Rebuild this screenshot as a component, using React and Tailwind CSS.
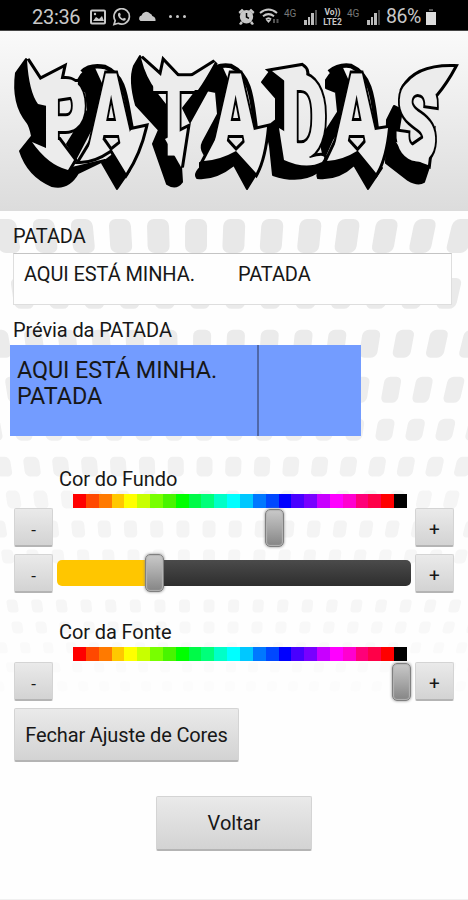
import React from "react";

const HUES = [
  "bg-[#ff0000]", "bg-[#ff4800]", "bg-[#ff7a00]", "bg-[#ffc800]", "bg-[#ffff00]", "bg-[#c8ff00]", "bg-[#78ff00]",
  "bg-[#48f500]", "bg-[#00ff00]", "bg-[#00fa48]", "bg-[#00ff7a]", "bg-[#00ffc8]", "bg-[#00ffff]", "bg-[#00c8ff]",
  "bg-[#0078ff]", "bg-[#0048ff]", "bg-[#0000ff]", "bg-[#4800ff]", "bg-[#7800ff]", "bg-[#c800ff]", "bg-[#ff00ff]",
  "bg-[#ff00d0]", "bg-[#ff0078]", "bg-[#ff0048]", "bg-[#ff0000]", "bg-[#000000]",
];

// Each dot row: top, height, one dot centre, spacing, dot width, grey level
const DOT_ROWS = [
  [219, 34, 196, 37.8, 22, "#e8e8e8"],
  [278, 31, 200, 35.6, 20, "#eaeaea"],
  [330, 28, 202, 33.6, 18, "#ebebeb"],
  [377, 26, 203, 31.4, 17, "#ededed"],
  [419, 22, 204, 30.2, 17, "#efefef"],
  [457, 20, 204.5, 28.8, 16, "#f1f1f1"],
  [491, 18, 205, 27.4, 14, "#f5f5f5"],
  [521, 17, 209, 26.2, 13, "#f4f4f4"],
  [550, 14, 209, 25.2, 12, "#f6f6f6"],
  [600, 13, 209, 24.6, 11, "#f6f6f6"],
  [622, 12, 209, 24, 11, "#f8f8f8"],
  [643, 11, 209, 23, 10, "#fafafa"],
  [663, 10, 209, 22, 10, "#fbfbfb"],
  [682, 10, 209, 21, 10, "#fcfcfc"],
];

function Backdrop() {
  return (
    <svg className="absolute inset-0 h-full w-full" viewBox="0 211 468 689" aria-hidden="true">
      {DOT_ROWS.map(([top, h, anchor, step, w, fill]) =>
        Array.from({ length: 27 }, (_, i) => {
          const x = anchor + (i - 13) * step;
          if (x < -20 || x > 488) return null;
          return (
            <rect
              key={`${top}-${i}`}
              x={-w / 2}
              y={-h / 2}
              width={w}
              height={h}
              rx={w * 0.32}
              fill={fill}
              transform={`translate(${x} ${top + h / 2}) skewX(${-(x - 190) * 0.05})`}
            />
          );
        })
      )}
    </svg>
  );
}

// Arrow tips and flares that sprout from the lettering
const FLARES = [
  "M27 60 L40 80 L63 68 L60 82 L78 82 L76 96 L50 100 L47 106 L38 104 Q29 92 27 60Z",
  "M32 142 L46 148 L47 140 L59 140 L74 160 L68 170 Q48 165 32 142Z",
  "M122 142 L131 130 L145 127 Q139 153 126 173 L112 150Z",
  "M80 161 L94 138 L103 140 L110 150 Q94 161 80 161Z",
  "M141 58 L161 76 L164 62 L183 82 L215 62 Q204 82 198 90 L156 90 Q146 78 141 58Z",
  "M165 139 L187 128 L181 167Z",
  "M204 161 L216 138 L226 140 L236 151 Q220 160 204 161Z",
  "M245 142 L254 130 L267 127 Q264 158 256 173 L236 151Z",
  "M272 71 L302 66 Q309 70 305 82 L288 84 L286 82Z",
  "M279 128 L289 134 L310 158 Q330 152 322 162 Q306 170 284 160Z",
  "M327 161 L338 138 L347 140 L357 151 Q343 160 327 161Z",
  "M366 142 L375 130 L388 128 Q385 158 376 173 L358 151Z",
  "M404 88 Q416 66 454 67 Q446 82 436 94 L418 90Z",
  "M396 142 L412 146 L432 132 L428 165 Q406 158 396 142Z",
];

function Logo() {
  return (
    <svg className="h-[180px] w-full" viewBox="0 31 468 180">
      {/* drop shadow masses and lower spikes */}
      <g fill="#000" stroke="#000" strokeWidth="2" strokeLinejoin="round">
        <path d="M26 59 L32 80 L44 108 L44 150 L72 168 L105 160 L78 173 Q68 190 52 186 Q28 176 20 151 L32 136 Q30 126 27 122 Q12 104 16 73Z" />
        <path d="M78 80 Q84 68 94 68 L104 90 L98 116 L76 158 L67 144 L88 110 L86 92 L76 86Z" />
        <path d="M102 163 L114 154 L130 170 L117 189Z" />
        <path d="M140 56 L146 80 L168 108 L168 140 L181 166 L182 182 Q176 190 167 184 L153 144 L159 130 L136 105 Q129 80 134 66Z" />
        <path d="M183 108 L200 86 L211 84 L190 122Z" />
        <path d="M205 80 Q212 68 222 68 L232 90 L228 116 L204 154 Q200 148 203 142 L218 114 L216 92 L206 90Z" />
        <path d="M200 163 L236 153 L260 168 L247 189 L234 165 Q215 180 197 178 Q194 174 200 168Z" />
        <path d="M262 82 L271 70 L287 82 L285 130 L283 158 Q302 168 322 160 L318 172 Q300 184 273 175 L270 146 L266 128 L276 120 L276 98Z" />
        <path d="M326 80 Q333 68 342 68 L352 90 L348 116 L332 140 L324 158 L320 140 L338 112 L336 92 L326 88Z" />
        <path d="M322 162 L357 152 L382 168 L368 189 L354 165 Q338 180 318 178 Q316 174 320 168Z" />
        <path d="M387 120 L394 106 L402 110 L397 140 Q412 158 430 164 L424 182 Q418 186 408 180 L386 163Z" />
      </g>
      <g fill="#ececec" stroke="#000" strokeWidth="6" strokeLinejoin="miter" strokeMiterlimit="2.5">
        {FLARES.map((d) => <path key={d} d={d} />)}
      </g>
      {/* crowns arching over the letters */}
      <g fill="none" stroke="#000" strokeWidth="4.5">
        <path d="M82 72 Q90 64 105 67 C127 76 126 103 132 130" />
        <path d="M209 72 Q217 64 231 66 C252 76 252 103 256 130" />
        <path d="M329 72 Q339 64 351 66 C373 76 373 103 377 130" />
      </g>
      <text
        transform="scale(.62 1)"
        fontFamily="Roboto, 'Liberation Sans', sans-serif"
        fontWeight="900"
        fill="#ececec"
        stroke="#000"
        strokeWidth="6"
        strokeLinejoin="miter"
        paintOrder="stroke"
      >
        <tspan x="68" y="158" fontSize="112">P</tspan>
        <tspan x="143" y="149" fontSize="106">A</tspan>
        <tspan x="245" y="156" fontSize="112">T</tspan>
        <tspan x="344" y="149" fontSize="106">A</tspan>
        <tspan x="452" y="159" fontSize="118">D</tspan>
        <tspan x="539" y="149" fontSize="106">A</tspan>
        <tspan x="634" y="157" fontSize="112" rotate="5">S</tspan>
      </text>
      <g fill="#ececec">
        {FLARES.map((d) => <path key={d} d={d} />)}
      </g>
    </svg>
  );
}

const BUTTON =
  "flex shrink-0 items-center justify-center rounded-[2px] border border-[#d4d4d4] border-b-2 border-b-[#b4b4b4] bg-linear-to-b from-[#eaeaea] to-[#d3d3d3] text-[#171717]";

function Step({ children }) {
  return <button className={`${BUTTON} h-[39px] w-[39px] text-[19px]`}>{children}</button>;
}

function Minus() {
  return <Step><span className="pt-[6px] text-[17px] leading-[20px]">-</span></Step>;
}

function Plus() {
  return <Step><span className="pt-[6px] leading-[20px]">+</span></Step>;
}

function Thumb() {
  return (
    <div className="h-[38px] w-[19px] shrink-0 rounded-[5px] border border-[#808080] bg-linear-to-b from-[#c9c9c9] via-[#a8a8a8] to-[#858585] shadow-[0_0_3px_#888,inset_0_0_1px_1px_#b5b5b5]" />
  );
}

function HueBar() {
  return (
    <div className="ml-[73px] flex h-[14px] w-[334px]">
      {HUES.map((c, i) => (
        <div key={i} className={`flex-1 ${c}`} />
      ))}
    </div>
  );
}

function Bars({ faded }) {
  return (
    <div className="flex h-[16px] items-end gap-[1px]">
      <i className="h-[5px] w-[2.5px] bg-[#bbb]" />
      <i className="h-[8px] w-[2.5px] bg-[#bbb]" />
      <i className="h-[12px] w-[2.5px] bg-[#bbb]" />
      <i className={`h-[15px] w-[2.5px] ${faded ? "bg-[#444]" : "bg-[#555]"}`} />
    </div>
  );
}

function StatusBar() {
  return (
    <div className="flex h-[31px] items-center border-b border-[#444] bg-black pl-[32px] pt-[3px] text-[#c8c8c8]">
      <span className="w-[58px] text-[20px] tracking-[-0.3px]">23:36</span>
      <svg className="h-[16px] w-[16px]" viewBox="0 0 16 16" fill="none" stroke="currentColor" strokeWidth="2">
        <rect x="1" y="1.5" width="14" height="13" rx="1" />
        <path d="M3 12 L6 8 L9 10 L12 7 L14 12Z" fill="currentColor" stroke="none" />
        <circle cx="5" cy="5" r="1.2" fill="currentColor" stroke="none" />
      </svg>
      <svg className="ml-[6px] h-[18px] w-[19px]" viewBox="0 0 19 18" fill="none" stroke="currentColor" strokeWidth="1.7">
        <path d="M2 16.5 L3.2 12.6 A7.7 7.7 0 1 1 6.2 15.3Z" />
        <path d="M6.5 5 L8 4.8 L8.8 7 L8 8 Q9 10 11 10.7 L12 9.8 L14 10.8 Q13.6 13 11.7 12.8 Q7 11.6 6 7.5 Q5.8 6 6.5 5Z" fill="currentColor" stroke="none" />
      </svg>
      <svg className="-mt-[2px] ml-[7px] h-[11px] w-[18px]" viewBox="0 0 18 11" fill="currentColor">
        <path d="M2.5 11 A3 3 0 0 1 3.5 5.5 A5 5 0 0 1 12 3.5 Q14 4 14.3 6 Q18 7 17.5 11Z" />
      </svg>
      <div className="ml-[13px] flex gap-[4px]">
        <i className="h-[3px] w-[3px] rounded-full bg-current" />
        <i className="h-[3px] w-[3px] rounded-full bg-current" />
        <i className="h-[3px] w-[3px] rounded-full bg-current" />
      </div>
      <svg className="ml-[52px] h-[17px] w-[17px]" viewBox="0 0 17 17" fill="currentColor">
        <circle cx="8.5" cy="8.8" r="6.7" />
        <path d="M0.5 4 L4 0.8 L6 2.4 L2 6Z M16.5 4 L13 .8 L11 2.4 L15 6Z M3 13 L5 15 L3 17 L1 16Z M14 13 L12 15 L14 17 L16 16Z" />
        <path d="M8.5 5 V9 L11 10.3" fill="none" stroke="#000" strokeWidth="1.5" />
      </svg>
      <svg className="ml-[4px] h-[17px] w-[21px]" viewBox="0 0 21 17" fill="none" stroke="currentColor" strokeWidth="2">
        <path d="M1 5 Q9.5 -2 18 5 M4 8.3 Q9.5 4 15 8.3 M7 11.5 Q9.5 9 12 11.5" />
        <path d="M7 12 L9.5 15 L12 12Z" fill="currentColor" stroke="none" />
        <path d="M15 11 V15 M18.5 11 V15" stroke="#555" />
      </svg>
      <span className="-mt-[7px] ml-[4px] w-[20px] text-[10px] text-[#777]">4G</span>
      <Bars />
      <span className="ml-[4px] flex w-[23px] flex-col items-center text-[8.5px] font-bold leading-[10px]">
        <span>Vo))</span>
        <span>LTE2</span>
      </span>
      <span className="-mt-[7px] ml-[3px] w-[20px] text-[10px] text-[#777]">4G</span>
      <Bars faded />
      <span className="ml-[6px] w-[38px] text-[19.5px] tracking-[-0.4px]">86%</span>
      <svg className="ml-[2px] h-[16px] w-[10px]" viewBox="0 0 10 16" fill="#ddd">
        <path d="M0 3 H10 V16 H0Z" />
        <path d="M3 0 H7 V2 H3Z" fill="#555" />
      </svg>
    </div>
  );
}

export default function App() {
  return (
    <div className="h-[900px] w-[468px] overflow-hidden bg-[#fefefe] font-[Roboto,'Liberation_Sans',sans-serif] text-[#171717]">
      <StatusBar />
      <header className="h-[180px] bg-linear-to-b from-[#fafafa] to-[#dcdcdc]">
        <Logo />
      </header>
      <main className="relative h-[689px] border-b border-[#f0f0f0]">
        <Backdrop />
        <div className="relative flex flex-col pt-[13px]">
          <label className="ml-[13px] h-[29px] text-[20px] leading-[24px] tracking-[-0.1px]">PATADA</label>
          <div className="ml-[13px] h-[52px] w-[439px] whitespace-pre border border-[#dedede] border-t-[#c4c4c4] bg-[#fefefe] pl-[10px] pt-[8px] text-[20px] leading-[24px] tracking-[-0.1px]">
            <span className="inline-block w-[214px]">AQUI ESTÁ MINHA.</span>PATADA
          </div>
          <div className="ml-[13px] mt-[13px] h-[27px] text-[20px] leading-[24px] tracking-[-0.1px]">Prévia da PATADA</div>
          <div className="ml-[10px] flex h-[91px] w-[351px] bg-[#739cff]">
            <div className="w-[249px] border-r-2 border-[#5068a8] pl-[7px] pt-[12px] text-[23.4px] leading-[26px] tracking-[-0.1px]">
              AQUI ESTÁ MINHA.
              <br />
              PATADA
            </div>
          </div>

          <div className="ml-[59px] mt-[31px] h-[27px] text-[20px] leading-[24px] tracking-[-0.1px]">Cor do Fundo</div>
          <HueBar />
          <div className="ml-[14px] flex h-[39px] w-[440px] items-center">
            <Minus />
            <div className="flex flex-1 pl-[212px]"><Thumb /></div>
            <Plus />
          </div>
          <div className="ml-[14px] mt-[7px] flex h-[39px] w-[440px] items-center">
            <Minus />
            <div className="-mt-[2px] ml-[4px] flex flex-1 items-center">
              <div className="h-[26px] w-[88px] rounded-l-[5px] bg-[#ffc600]" />
              <Thumb />
              <div className="mr-[4px] h-[26px] flex-1 rounded-r-[5px] bg-linear-to-b from-[#4b4b4b] to-[#2e2e2e]" />
            </div>
            <Plus />
          </div>
          <div className="ml-[59px] mt-[27px] h-[27px] text-[20px] leading-[24px] tracking-[-0.1px]">Cor da Fonte</div>
          <HueBar />
          <div className="ml-[14px] mt-px flex h-[39px] w-[440px] items-center">
            <Minus />
            <div className="flex flex-1 justify-end pr-[4px]"><Thumb /></div>
            <Plus />
          </div>
          <button className={`${BUTTON} ml-[14px] mt-[7px] h-[54px] w-[225px] text-[20px] tracking-[-0.15px]`}>Fechar Ajuste de Cores</button>
          <button className={`${BUTTON} mt-[34px] h-[55px] w-[156px] self-center text-[20px]`}>Voltar</button>
        </div>
      </main>
    </div>
  );
}
